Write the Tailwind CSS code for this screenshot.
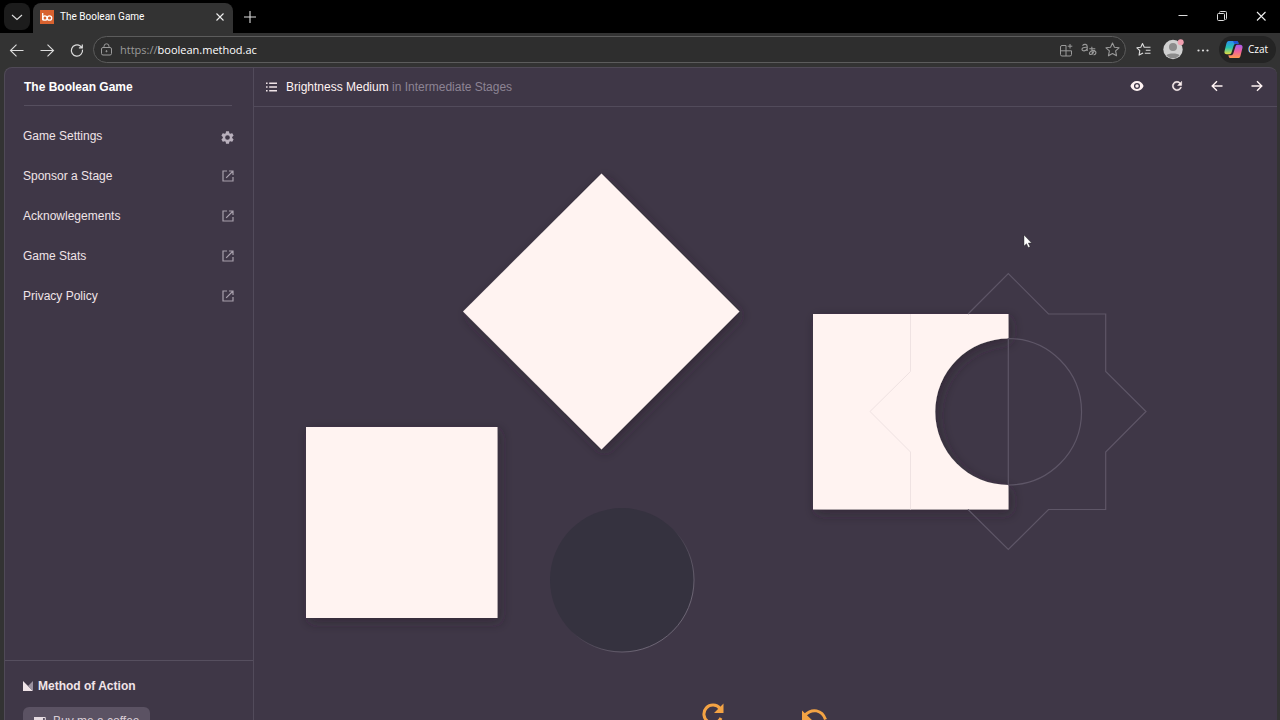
<!DOCTYPE html>
<html lang="en">
<head>
<meta charset="utf-8">
<meta name="viewport" content="width=device-width, initial-scale=1">
<title>The Boolean Game</title>
<script src="https://cdn.jsdelivr.net/npm/@tailwindcss/browser@4"></script>
</head>
<body class="flex h-screen flex-col overflow-hidden bg-[#333333] font-['Open_Sans','Noto_Sans',sans-serif] text-white">

<!-- Tab strip -->
<header class="flex h-[33px] shrink-0 items-end bg-black pl-1">
  <button aria-label="Search tabs" class="mb-[3px] grid h-[27px] w-[26px] place-items-center rounded-lg bg-[#1c1c1c]">
    <svg class="size-3" viewBox="0 0 12 12" fill="none" stroke="#ddd" stroke-width="1.1"><path d="M1 4l5 4.500L11 4"/></svg>
  </button>
  <div class="ml-[3px] flex h-[30px] w-[200px] items-center rounded-t-lg bg-[#333333] pr-2 pb-[2px] pl-[7px]">
    <span class="grid size-[14px] place-items-center bg-[#d8622f]">
      <svg class="size-[14px]" viewBox="0 0 14 14" fill="none" stroke="#fff" stroke-width="1.3"><path d="M2.700 3v7.300"/><circle cx="4.900" cy="8" r="2.200"/><circle cx="9.500" cy="8" r="2.200"/></svg>
    </span>
    <span class="ml-[6px] flex-1 font-[Roboto,sans-serif] text-[10px] leading-4">The Boolean Game</span>
    <button aria-label="Close tab" class="grid size-[10px] place-items-center"><svg class="size-[10px]" viewBox="0 0 10 10" stroke="#eee" stroke-width="1.1"><path d="M1.5 1.5l7 7M8.5 1.5l-7 7"/></svg></button>
  </div>
  <button aria-label="New tab" class="mb-[9px] ml-[10px]"><svg class="size-[14px]" viewBox="0 0 14 14" stroke="#ddd" stroke-width="1.1"><path d="M7 1v12M1 7h12"/></svg></button>
  <div class="mb-[11px] ml-auto flex items-center gap-[27px] pr-[13px]">
    <button aria-label="Minimize"><svg class="size-3" viewBox="0 0 12 12" stroke="#ddd" fill="none"><path d="M1.5 5.5h9"/></svg></button>
    <button aria-label="Restore"><svg class="size-3" viewBox="0 0 12 12" stroke="#ddd" fill="none"><rect x="1.5" y="3.5" width="7" height="7" rx="1"/><path d="M3.5 2.500V2.500a1 1 0 0 1 1-1h5a1 1 0 0 1 1 1v6a1 1 0 0 1-1 1"/></svg></button>
    <button aria-label="Close window"><svg class="size-3" viewBox="0 0 12 12" stroke="#eee" stroke-width="1.1"><path d="M2 2l8.500 8.500M10.500 2l-8.500 8.500"/></svg></button>
  </div>
</header>

<!-- Address bar -->
<nav class="flex h-[33px] shrink-0 items-center bg-[#333333] pr-1 pl-[9px]">
  <div class="flex gap-[14px]">
    <button aria-label="Back"><svg class="size-4" viewBox="0 0 16 16" fill="none" stroke="#ddd" stroke-width="1.1"><path d="M14.500 8.500H1.500M7.500 2.700l-6 5.800 6 5.800"/></svg></button>
    <button aria-label="Forward"><svg class="size-4" viewBox="0 0 16 16" fill="none" stroke="#ddd" stroke-width="1.1"><path d="M1.500 8.500h13M8.500 2.700l6 5.800-6 5.800"/></svg></button>
    <button aria-label="Refresh"><svg class="size-4" viewBox="0 0 16 16" fill="none" stroke="#ddd" stroke-width="1.2"><path d="M13.500 7.700A5.600 5.600 0 1 1 11.300 4L13 5.700M13.300 2.500v3.400H9.900"/></svg></button>
  </div>
  <div class="ml-2 flex h-[27px] flex-1 items-center rounded-full border border-[#5c5c5c] bg-[#2e2e2e] pr-[5px] pl-[6px] text-[#9a9a9a]">
    <svg class="size-[13px]" viewBox="0 0 13 13" fill="none" stroke="currentColor"><rect x="1.500" y="4.500" width="10" height="7.500" rx="1.500"/><path d="M4 4.500V3.300a2.500 2.500 0 0 1 5 0v1.200"/><circle cx="6.500" cy="8.200" r=".6" fill="currentColor"/></svg>
    <a href="#" class="ml-[7px] flex-1 text-[11px] leading-4">https://<span class="text-white">boolean.method.ac</span></a>
    <div class="flex items-center gap-2">
      <button aria-label="Apps"><svg class="size-[14px]" viewBox="0 0 14 14" fill="none" stroke="currentColor"><path d="M7 2.500H3a1.500 1.500 0 0 0-1.500 1.500v7.500A1.500 1.500 0 0 0 3 13h8a1.500 1.500 0 0 0 1.500-1.500V7.800H1.500M7 2.500V13M11 1v4.500M8.700 3.200h4.600"/></svg></button>
      <button aria-label="Translate"><svg class="h-[15px] w-4" viewBox="0 0 16 15" fill="none" stroke="currentColor" stroke-width="1.100"><path d="M1.500 3.600C3 1.800 6.200 1.800 6.200 4.500V9M6.200 5.300C2.500 5 1 6 1 7.200c0 2.400 4 2.300 5.200-.5M8.300 6.800h6M10.800 4.800c0 3 .2 5.200.9 7.700M13.500 8c-1 3-3 4.700-4.500 4.400-1.500-.7 0-3.800 3-3.800 4 0 3.600 3.800.6 4.400"/></svg></button>
      <button aria-label="Favorite"><svg class="size-[15px]" viewBox="0 0 14 14" fill="none" stroke="currentColor" stroke-linejoin="round"><path d="M7 1l1.800 3.900 4.300.5-3.200 2.900.9 4.600L7 10.700l-3.800 2.200.9-4.600L.9 5.400l4.300-.5z"/></svg></button>
    </div>
  </div>
  <div class="flex items-center pl-[10px]">
    <button aria-label="Favorites"><svg class="h-[15px] w-4" viewBox="0 0 16 14" fill="none" stroke="#ddd" stroke-width="1.100" stroke-linejoin="round"><path d="M9 4.800L8.200 4.700 6.500 1 4.800 4.700.9 5.300l2.900 2.800L3.100 12.600l4-2.200M9 4.800h5.500M9.800 7.800h4.700M8.800 10.800h5.700"/></svg></button>
    <button aria-label="Profile" class="ml-[11px]"><svg class="size-[21px]" viewBox="0 0 21 21"><circle cx="10" cy="10.500" r="9.700" fill="#d0d0d0"/><circle cx="10" cy="8" r="4" fill="#8c8c8c"/><path d="M3.500 16.500c1-2.600 12-2.600 13 0a9 9 0 0 1-13 0z" fill="#8c8c8c"/><circle cx="17.700" cy="3.300" r="3" fill="#f0a0b0"/></svg></button>
    <button aria-label="More" class="ml-[12px]"><svg class="h-4 w-[14px]" viewBox="0 0 14 16" fill="#ddd"><circle cx="2.500" cy="8.500" r="1.100"/><circle cx="7" cy="8.500" r="1.100"/><circle cx="11.500" cy="8.500" r="1.100"/></svg></button>
    <button class="ml-[9px] flex h-[27px] items-center gap-[5px] rounded-full bg-[#242424] pr-2 pl-[5px] text-[10px]">
      <svg class="size-[19px]" viewBox="0 0 20 20"><defs><linearGradient id="c1" x1="0" y1="0" x2="0" y2="1"><stop offset="0" stop-color="#2b8cf0"/><stop offset=".5" stop-color="#27c4b0"/><stop offset="1" stop-color="#e8dc3c"/></linearGradient><linearGradient id="c2" x1="0" y1="0" x2="0" y2="1"><stop offset="0" stop-color="#a45cf0"/><stop offset=".5" stop-color="#f0609c"/><stop offset="1" stop-color="#ff9a50"/></linearGradient></defs><path d="M5 1h8c1.500 0 2 1 2.400 3H12.500c-1.500 0-2 1-2.500 2.500L8 13c-.5 1.500-1 2-2.500 2H3c-2 0-3-1.300-2.400-3.500l2-8C3 2 3.700 1 5 1z" fill="url(#c1)"/><path d="M9.500 1H13c1.500 0 2 1 2.400 3h-4.600z" fill="#2050d8"/><path d="M15 19H7c-1.500 0-2-1-2.400-3h2.900c1.500 0 2-1 2.500-2.500L12 7c.5-1.500 1-2 2.500-2H17c2 0 3 1.300 2.400 3.500l-2 8C17 18 16.300 19 15 19z" fill="url(#c2)"/></svg>
      Czat
    </button>
  </div>
</nav>

<!-- Game -->
<div class="mt-px mr-[3px] ml-1 flex min-h-0 flex-1 overflow-hidden rounded-t-lg border-t border-l border-[#504a57] bg-[#3f3747] font-['Liberation_Sans',Arial,sans-serif] text-[12px] leading-4">
  <aside class="flex w-[249px] shrink-0 flex-col border-r border-[#524b5b]">
    <h1 class="mr-[21px] ml-[19px] border-b border-[#564f5f] pt-[11px] pb-[10px] font-bold">The Boolean Game</h1>
    <ul class="mt-[10px] flex flex-col text-[#f0e4e8]">
      <li><a href="#" class="flex h-10 items-center justify-between pr-[19px] pl-[18px]">Game Settings
        <svg class="mt-[3px] size-[13px]" viewBox="2 2 20 20" fill="#b9b0bd"><path d="M19.140 12.940c.04-.3.060-.61.060-.94 0-.32-.02-.64-.07-.94l2.030-1.580a.49.49 0 0 0 .12-.61l-1.920-3.320a.49.49 0 0 0-.59-.22l-2.390.96c-.5-.38-1.030-.7-1.620-.94l-.36-2.540A.48.48 0 0 0 13.920 2.400h-3.840c-.24 0-.43.17-.47.41l-.36 2.540c-.59.240-1.130.57-1.620.94l-2.390-.96a.48.48 0 0 0-.59.220L2.740 8.870a.47.47 0 0 0 .12.610l2.030 1.580c-.05.300-.09.630-.09.940s.02.640.07.940l-2.030 1.580a.49.49 0 0 0-.12.610l1.920 3.320c.12.220.37.290.59.220l2.390-.96c.5.380 1.030.700 1.620.940l.36 2.540c.05.240.24.410.48.410h3.840c.24 0 .44-.17.47-.41l.36-2.540c.59-.24 1.130-.56 1.620-.94l2.390.96c.22.080.47 0 .59-.22l1.920-3.320a.47.47 0 0 0-.12-.61zM12 15.600a3.600 3.600 0 1 1 0-7.200 3.600 3.600 0 0 1 0 7.200z"/></svg></a></li>
      <li><a href="#" class="flex h-10 items-center justify-between pr-[19px] pl-[18px]">Sponsor a Stage <svg class="size-3" viewBox="0 0 12 12" fill="none" stroke="#a79fac" stroke-width="1.200"><path d="M5 1H1v10h10V7M7 1h4v4M11 1L4.200 7.800"/></svg></a></li>
      <li><a href="#" class="flex h-10 items-center justify-between pr-[19px] pl-[18px]">Acknowlegements <svg class="size-3" viewBox="0 0 12 12" fill="none" stroke="#a79fac" stroke-width="1.200"><path d="M5 1H1v10h10V7M7 1h4v4M11 1L4.200 7.800"/></svg></a></li>
      <li><a href="#" class="flex h-10 items-center justify-between pr-[19px] pl-[18px]">Game Stats <svg class="size-3" viewBox="0 0 12 12" fill="none" stroke="#a79fac" stroke-width="1.200"><path d="M5 1H1v10h10V7M7 1h4v4M11 1L4.200 7.800"/></svg></a></li>
      <li><a href="#" class="flex h-10 items-center justify-between pr-[19px] pl-[18px]">Privacy Policy <svg class="size-3" viewBox="0 0 12 12" fill="none" stroke="#a79fac" stroke-width="1.200"><path d="M5 1H1v10h10V7M7 1h4v4M11 1L4.200 7.800"/></svg></a></li>
    </ul>
    <footer class="mt-auto h-[60px] shrink-0 border-t border-[#564f5f] pt-[17px] pl-[18px] text-[#f0e4e8]">
      <a href="#" class="flex items-center gap-[5px] font-bold">
        <svg class="size-[10px]" viewBox="0 0 10 10"><path d="M0 0l10 10H0z" fill="#f0e4e8"/><path d="M10 0v10L5 5z" fill="#9a919f"/></svg>Method of Action</a>
      <button class="mt-[13px] flex h-7 w-[127px] items-center gap-[7px] rounded-md bg-[#5b5263] pl-[11px] whitespace-nowrap text-[#d9ced6]">
        <svg class="h-[10px] w-3 shrink-0" viewBox="0 0 12 10"><path d="M0 1h9v6a2 2 0 0 1-2 2H2a2 2 0 0 1-2-2z" fill="#e6dce2"/><path d="M9 1.500h2.300V4.500H9" fill="none" stroke="#e6dce2"/></svg>Buy me a coffee</button>
    </footer>
  </aside>

  <section class="flex min-w-0 flex-1 flex-col">
    <div class="flex h-[39px] shrink-0 items-center border-b border-[#524b5b] pr-[13px] pl-3">
      <button aria-label="Stages"><svg class="h-[10px] w-[11px]" viewBox="0 0 11 10" fill="#f0e4e8"><path d="M0 .5h1.600v1.500H0zM3.200.5H11v1.500H3.200zM0 4.200h1.600v1.500H0zM3.200 4.200H11v1.500H3.200zM0 8h1.600v1.500H0zM3.200 8H11v1.500H3.200z"/></svg></button>
      <h2 class="ml-[9px] text-[#8d8494]"><span class="text-[#fff3f3]">Brightness Medium</span> in Intermediate Stages</h2>
      <div class="ml-auto flex items-center gap-[26px] pb-[3px] text-[#fff3f3]">
        <button aria-label="Show solution"><svg class="size-[14px]" viewBox="0 0 24 24" fill="currentColor"><path d="M12 3.500C6.500 3.500 2.300 7 .7 12 2.300 17 6.500 20.500 12 20.500s9.700-3.500 11.300-8.500C21.700 7 17.500 3.500 12 3.500zm0 13.700a5.200 5.200 0 1 1 0-10.400 5.200 5.200 0 0 1 0 10.400zm0-8.200a3 3 0 1 0 0 6 3 3 0 0 0 0-6z"/></svg></button>
        <button aria-label="Restart"><svg class="size-[14px]" viewBox="0 0 24 24" fill="currentColor"><path d="M17.650 6.350A8 8 0 1 0 19.730 14h-2.080A6 6 0 1 1 12 6c1.660 0 3.140.69 4.220 1.780L13 11h7V4z" stroke="currentColor" stroke-width=".8"/></svg></button>
        <button aria-label="Previous"><svg class="size-[14px]" viewBox="0 0 14 14" fill="none" stroke="currentColor" stroke-width="1.400"><path d="M12.500 7H2.300M7 2.200L2.200 7 7 11.800"/></svg></button>
        <button aria-label="Next"><svg class="size-[14px]" viewBox="0 0 14 14" fill="none" stroke="currentColor" stroke-width="1.400"><path d="M1.500 7h10.200M7 2.200L11.800 7 7 11.800"/></svg></button>
      </div>
    </div>
    <main class="min-h-0 flex-1 overflow-hidden">
      <svg class="h-full w-full" viewBox="254 107 1023 613" preserveAspectRatio="xMidYMin meet" role="img" aria-label="Puzzle pieces and target outline">
        <defs>
          <filter id="shade" x="-20%" y="-20%" width="150%" height="150%"><feDropShadow dx="3" dy="4" stdDeviation="6" flood-color="#25222c" flood-opacity=".5"/></filter>
          <linearGradient id="rim" x1="0" y1="0" x2="1" y2="1"><stop offset=".5" stop-color="#77707f" stop-opacity="0"/><stop offset=".8" stop-color="#6c6574"/></linearGradient>
        </defs>
        <g fill="#fff3f1">
          <path filter="url(#shade)" d="M601.500 173.500L739.500 311.500 601.500 449.500 463 311.500z"/>
          <path filter="url(#shade)" d="M306 427h191.500v191H306z"/>
          <path filter="url(#shade)" d="M813 314h195.500v24.500a73.250 73.250 0 0 0 0 146.500v24.500H813z"/>
        </g>
        <circle cx="622" cy="580" r="72" fill="#35323f" stroke="url(#rim)"/>
        <g fill="none" stroke="#5e5667" stroke-width="1.200">
          <path d="M968 314L1008.300 273.500 1048.500 314H1105.700V371.500L1146 411.500 1105.700 452V509.500H1048.500L1008.300 549.500 968 509.500"/>
          <path d="M1008.300 485V338.500a73.200 73.200 0 0 1 0 146.500"/>
        </g>
        <path d="M910.500 314V371.500L870 411.500 910.500 452V509.500" fill="none" stroke="#efe2e2"/>
        <g fill="none" stroke="#f3a344" stroke-width="3">
          <path d="M720 708.500A9 9 0 1 0 721 718"/>
          <path d="M805 715c7-7 17-5.500 20.500 4.500"/>
        </g>
        <path d="M723.500 703.500v9.500h-9.500zM802 710.500v10.500h11z" fill="#f3a344"/>
        <path d="M1024 235v11l2.500-2.300 1.800 3.800 1.800-.8-1.800-3.700h3.300z" fill="#fff" stroke="#222" stroke-width=".4"/>
      </svg>
    </main>
  </section>
</div>
</body>
</html>
